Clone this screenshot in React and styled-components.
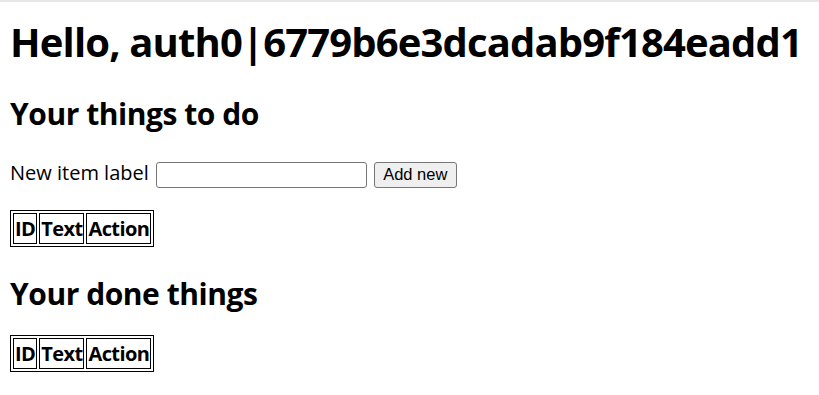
import React from 'react';
import styled, { createGlobalStyle } from 'styled-components';

const Global = createGlobalStyle`
  html, body {
    margin: 0;
    background: #fff;
  }
  body {
    border-top: 2px solid #e6e6e6;
    padding: 0 10px;
    font-family: "Open Sans", "Noto Sans", sans-serif;
    font-size: 20px;
    color: #000;
  }
`;

const Title = styled.h1`
  font-size: 40px;
  font-weight: 700;
  letter-spacing: -0.85px;
  line-height: 52px;
  white-space: nowrap;
  margin: 14px 0 0;
`;

const Section = styled.h2`
  font-size: 30px;
  font-weight: 700;
  letter-spacing: -0.45px;
  line-height: 40px;
  margin: ${(p) => p.$top}px 0 0;
`;

const Form = styled.form`
  display: flex;
  align-items: center;
  gap: 7px;
  margin: 25px 0 0;
`;

const Label = styled.label`
  margin-bottom: 4px;
`;

const Input = styled.input`
  width: 211px;
  height: 26px;
  box-sizing: border-box;
  border: 1px solid #767676;
  border-radius: 3px;
  padding: 1px 3px;
`;

const Button = styled.button`
  width: 83px;
  height: 26px;
  box-sizing: border-box;
  font-family: "Liberation Sans", Arial, sans-serif;
  font-size: 16.5px;
  color: #000;
  background: #efefef;
  border: 1px solid #767676;
  border-radius: 3px;
  padding: 0;
`;

const Table = styled.table`
  border: 1px solid #000;
  border-spacing: 2px;
  margin: ${(p) => p.$top}px 0 0;
`;

const Th = styled.th`
  border: 1px solid #000;
  padding: 1px;
  font-size: 20px;
  line-height: 27px;
  letter-spacing: -0.6px;
  font-weight: 700;
`;

const TodoTable = ({ top }) => (
  <Table $top={top}>
    <thead>
      <tr>
        <Th>ID</Th>
        <Th>Text</Th>
        <Th>Action</Th>
      </tr>
    </thead>
    <tbody />
  </Table>
);

export default function App() {
  return (
    <>
      <Global />
      <Title>Hello, auth0|6779b6e3dcadab9f184eadd1</Title>
      <Section $top={26}>Your things to do</Section>
      <Form onSubmit={(e) => e.preventDefault()}>
        <Label htmlFor="label">New item label</Label>
        <Input id="label" type="text" />
        <Button type="submit">Add new</Button>
      </Form>
      <TodoTable top={20} />
      <Section $top={27}>Your done things</Section>
      <TodoTable top={21} />
    </>
  );
}
